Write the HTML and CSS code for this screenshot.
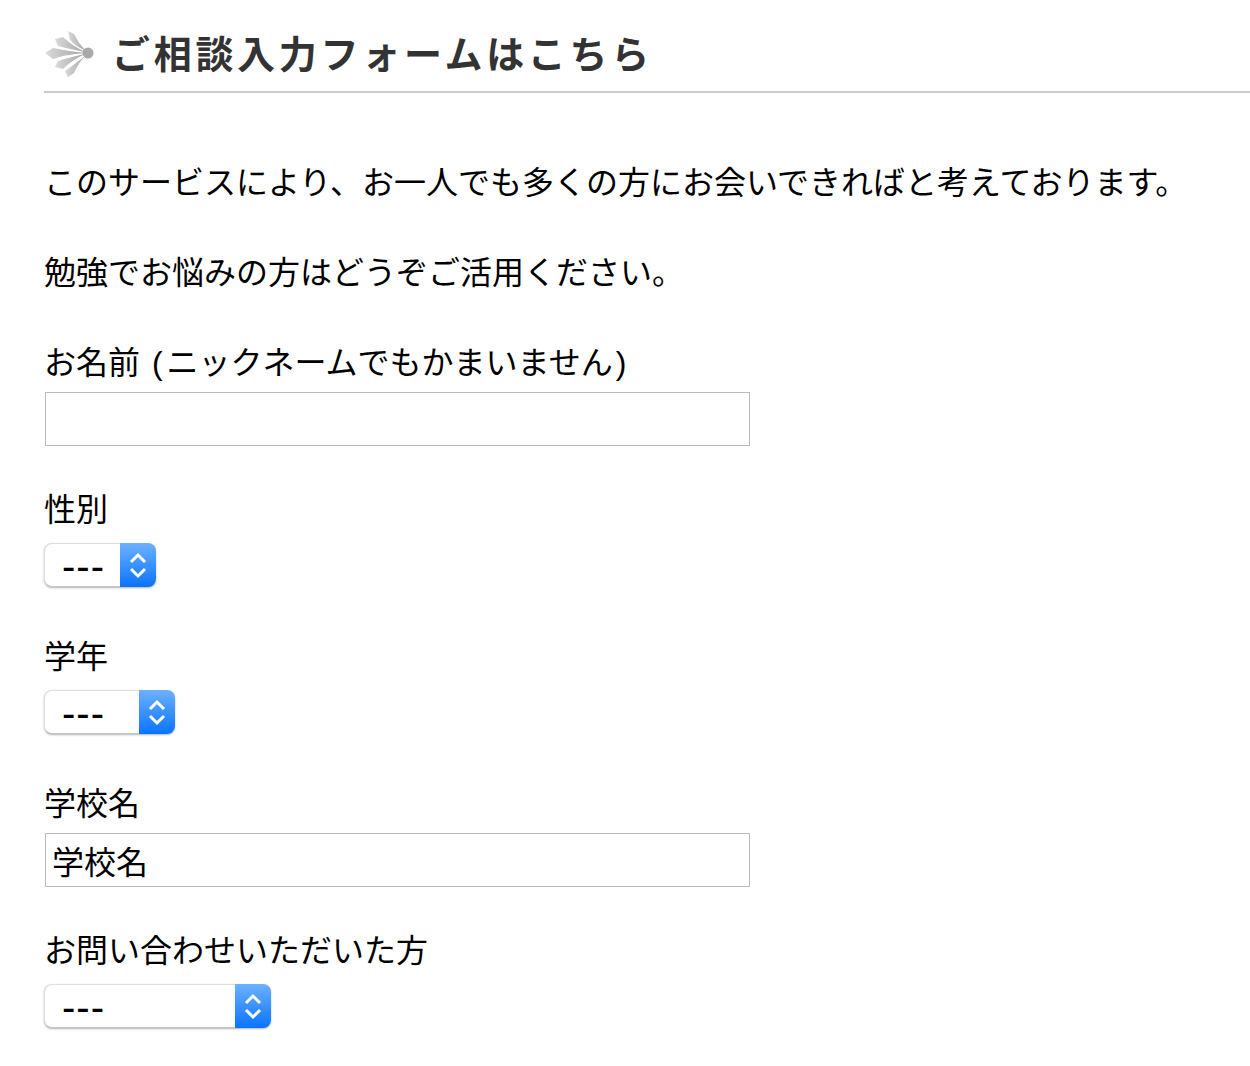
FILE: index.html
```html
<!DOCTYPE html>
<html lang="ja">
  <head>
    <title>ご相談入力フォーム</title>
    <meta name="viewport" content="width=device-width, initial-scale=1.0" />
    <link rel="stylesheet" href="styles.css">
  </head>

  <body>
    <h2 class="section-title">
      <svg class="title-icon" width="52" height="50" viewBox="0 0 52 50" aria-hidden="true">
        <defs>
          <linearGradient id="feather" x1="0" x2="1" y1="0" y2="0">
            <stop offset="0" stop-color="#dadada" />
            <stop offset="1" stop-color="#a4a4a4" />
          </linearGradient>
        </defs>
        <circle cx="44" cy="24" r="5.5" fill="#aaa" />
        <path d="M24 2 L30 5 C33 11 37 17 42 22 C35 19 30 15 26 11 Z" fill="url(#feather)" />
        <path d="M11 10 L19 8 C25 14 33 19 41 23 C31 21 21 19 14 17 Z" fill="url(#feather)" />
        <path d="M1 24 L9 19 C20 21 31 23 41 24 C31 25 20 26 9 30 Z" fill="url(#feather)" />
        <path d="M11 38 L14 32 C22 29 32 27 41 25 C33 29 26 33 19 40 Z" fill="url(#feather)" />
        <path d="M24 48 L21 42 C28 37 36 31 42 26 C37 31 33 37 30 44 Z" fill="url(#feather)" />
      </svg>
      <span>ご相談入力フォームはこちら</span>
    </h2>

    <form class="contact-form">
      <p class="intro">このサービスにより、お一人でも多くの方にお会いできればと考えております。</p>
      <p class="intro">勉強でお悩みの方はどうぞご活用ください。</p>

      <div class="field field-input">
        <label for="name">お名前 <span class="paren-open">(</span>ニックネームでもかまいません<span class="paren-close">)</span></label>
        <input id="name" class="text-input" type="text" />
      </div>

      <div class="field field-select">
        <label for="gender">性別</label>
        <div class="select-box gender">
          <select id="gender"><option>---</option></select>
          <span class="select-arrows">
            <svg width="20" height="30" viewBox="0 0 20 30" fill="none" stroke="#fff" stroke-width="3">
              <path d="M3 12 L10 5 L17 12" />
              <path d="M3 19 L10 26 L17 19" />
            </svg>
          </span>
        </div>
      </div>

      <div class="field field-select">
        <label for="grade">学年</label>
        <div class="select-box grade">
          <select id="grade"><option>---</option></select>
          <span class="select-arrows">
            <svg width="20" height="30" viewBox="0 0 20 30" fill="none" stroke="#fff" stroke-width="3">
              <path d="M3 12 L10 5 L17 12" />
              <path d="M3 19 L10 26 L17 19" />
            </svg>
          </span>
        </div>
      </div>

      <div class="field field-input">
        <label for="school">学校名</label>
        <input id="school" class="text-input" type="text" value="学校名" />
      </div>

      <div class="field field-select">
        <label for="who">お問い合わせいただいた方</label>
        <div class="select-box who">
          <select id="who"><option>---</option></select>
          <span class="select-arrows">
            <svg width="20" height="30" viewBox="0 0 20 30" fill="none" stroke="#fff" stroke-width="3">
              <path d="M3 12 L10 5 L17 12" />
              <path d="M3 19 L10 26 L17 19" />
            </svg>
          </span>
        </div>
      </div>
    </form>
  </body>
</html>
```

FILE: styles.css
```css
/* Page base */
body {
  margin: 0;
  padding: 0 0 0 44px;
  background-color: #fff;
  color: #000;
  font-family: "Liberation Sans", "Noto Sans CJK JP", sans-serif;
  font-size: 32px;
}

.section-title {
  display: flex;
  align-items: center;
  height: 79px;
  margin: 0;
  padding-top: 12px;
  border-bottom: 2px solid #ccc;
  color: #333;
  font-size: 38px;
  font-weight: 700;
  letter-spacing: 3.7px;
}

.title-icon {
  margin: 4px 16px 0 0;
  flex: none;
}

.contact-form {
  padding-top: 68px;
}

.intro {
  margin: 0 0 45px;
  line-height: 45px;
}

.field label {
  display: block;
  line-height: 45px;
}

.paren-open {
  margin: 0 4px 0 3px;
}

.paren-close {
  margin-left: 3px;
}

.field-input {
  margin-bottom: 42px;
}

.field-select {
  margin-bottom: 48px;
}

.text-input {
  display: block;
  box-sizing: border-box;
  width: 705px;
  height: 54px;
  margin: 6px 0 0 1px;
  padding: 0 6px;
  border: 1px solid #bbb;
  border-radius: 0;
  background: #fff;
  color: #000;
  font-family: inherit;
  font-size: 32px;
  outline: none;
}

/* Mac style popup button */
.select-box {
  position: relative;
  box-sizing: border-box;
  height: 44px;
  margin-top: 10px;
  border: 1px solid #ddd;
  border-bottom-color: #c4c4c4;
  border-radius: 8px;
  background: #fff;
  box-shadow: 0 1px 2px rgba(0, 0, 0, 0.3);
}

.select-box select {
  display: block;
  width: 100%;
  height: 100%;
  padding: 0 0 0 17px;
  border: none;
  background: transparent;
  color: #000;
  font-family: "Liberation Sans", sans-serif;
  font-size: 40px;
  letter-spacing: 1px;
  appearance: none;
  -webkit-appearance: none;
  outline: none;
}

.select-arrows {
  position: absolute;
  top: -1px;
  right: -1px;
  bottom: -1px;
  display: flex;
  align-items: center;
  justify-content: center;
  width: 36px;
  border-radius: 0 8px 8px 0;
  background: linear-gradient(#6cb1ff, #0a74ff);
}

.gender {
  width: 112px;
}

.grade {
  width: 131px;
}

.who {
  width: 227px;
}
```
